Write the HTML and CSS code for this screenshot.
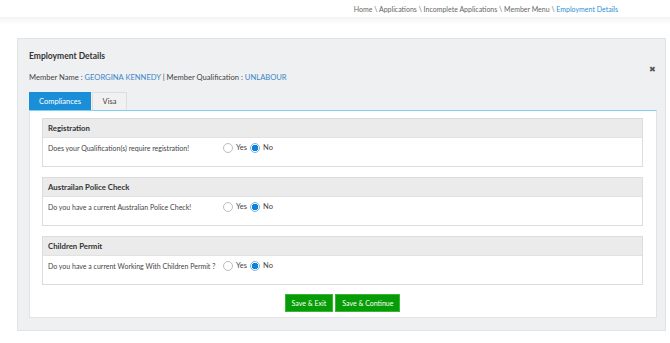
FILE: index.html
```html
<!DOCTYPE html>
<html>
<head>
<meta charset="utf-8">
<link rel="stylesheet" href="styles.css">
</head>
<body>
<div class="crumbs">
  <span>Home \ Applications \ Incomplete Applications \ Member Menu \ <a class="crumb-current">Employment Details</a></span>
</div>
<div class="crumb-shadow"></div>
<div class="panel">
  <div class="panel-head">
    <div class="head-text">
      <div class="title">Employment Details</div>
      <div class="member">Member Name : <span class="link">GEORGINA KENNEDY</span> | Member Qualification : <span class="link">UNLABOUR</span></div>
    </div>
    <div class="close">&#x2716;</div>
  </div>
  <div class="tabs">
    <div class="tab active">Compliances</div>
    <div class="tab">Visa</div>
  </div>
  <div class="tab-content">
    <div class="section">
      <div class="section-head">Registration</div>
      <div class="section-body">
        <span class="question">Does your Qualification(s) require registration!</span>
        <span class="radio"></span><span class="opt">Yes</span>
        <span class="radio on"></span><span class="opt">No</span>
      </div>
    </div>
    <div class="section">
      <div class="section-head">Austrailan Police Check</div>
      <div class="section-body">
        <span class="question">Do you have a current Australian Police Check!</span>
        <span class="radio"></span><span class="opt">Yes</span>
        <span class="radio on"></span><span class="opt">No</span>
      </div>
    </div>
    <div class="section">
      <div class="section-head">Children Permit</div>
      <div class="section-body">
        <span class="question">Do you have a current Working With Children Permit ?</span>
        <span class="radio"></span><span class="opt">Yes</span>
        <span class="radio on"></span><span class="opt">No</span>
      </div>
    </div>
    <div class="actions">
      <button class="btn">Save &amp; Exit</button>
      <button class="btn">Save &amp; Continue</button>
    </div>
  </div>
</div>
</body>
</html>
```

FILE: styles.css
```css
* { box-sizing: border-box; }
body {
  margin: 0;
  background: #fff;
  font-family: Lato, "Open Sans", sans-serif;
  font-size: 7.5px;
  color: #333;
}
.crumbs {
  height: 17px;
  display: flex;
  justify-content: flex-end;
  align-items: center;
  padding-right: 52px;
  color: #666;
  font-size: 7px;
  white-space: nowrap;
}
.crumb-current { color: #2d8fd5; }
.crumb-shadow {
  height: 8px;
  background: linear-gradient(#f4f4f5, #fff);
}
.panel {
  margin: 13px 4px 0 17px;
  height: 293px;
  background: #eff0f2;
  border: 1px solid #e2e3e5;
  padding: 0 8px 0 11px;
}
.panel-head {
  display: flex;
  justify-content: space-between;
  align-items: flex-start;
  padding-top: 12px;
}
.title {
  font-weight: bold;
  font-size: 8.5px;
  color: #333;
  height: 10px;
  line-height: 10px;
}
.member {
  margin-top: 11px;
  height: 10px;
  line-height: 10px;
  color: #444;
  font-size: 7.6px;
}
.link { color: #3a86c8; }
.close {
  font-size: 7.5px;
  line-height: 8px;
  color: #555;
  margin-top: 15px;
  margin-right: 1px;
}
.tabs {
  display: flex;
  margin-top: 10px;
  gap: 1px;
}
.tab {
  height: 18px;
  line-height: 17px;
  background: #f1f1f1;
  border: 1px solid #dedede;
  border-bottom: none;
  color: #444;
  text-align: center;
  width: 35px;
}
.tab.active {
  background: #1a8fd8;
  border-color: #1a8fd8;
  color: #fff;
  width: 62px;
}
.tab-content {
  background: #fff;
  border-top: 1.5px solid #7cd0f2;
  border-left: 1px solid #e3e3e3;
  border-right: 1px solid #e3e3e3;
  border-bottom: 1px solid #e3e3e3;
  height: 208px;
  padding: 7px 13px 0 12px;
  display: flex;
  flex-direction: column;
  gap: 10px;
}
.section {
  border: 1px solid #dcdcdc;
  background: #fff;
}
.section-head {
  height: 19px;
  line-height: 19px;
  background: #ebebeb;
  border-bottom: 1px solid #e2e2e2;
  padding-left: 5px;
  font-weight: bold;
  color: #333;
  font-size: 7.8px;
}
.section-body {
  height: 28px;
  display: flex;
  align-items: flex-start;
  padding: 5px 0 0 5px;
  line-height: 10px;
  color: #444;
}
.question {
  width: 175px;
  white-space: nowrap;
  font-size: 7px;
}
.radio {
  width: 10px;
  height: 10px;
  border: 1px solid #bdbdbd;
  border-radius: 50%;
  background: #fff;
  margin-right: 3px;
  flex: none;
}
.radio.on {
  border-color: #7fb5e0;
  background: radial-gradient(circle, #0a82de 0 3px, #fff 3.5px);
}
.opt { margin-right: 3px; }
.actions {
  display: flex;
  justify-content: center;
  gap: 2px;
  margin-top: -1px;
}
.btn {
  font-family: Lato, "Open Sans", sans-serif;
  font-size: 7px;
  color: #fff;
  background: #069c06;
  border: 1px solid #3bb53b;
  height: 18px;
  padding: 0 6px;
  cursor: pointer;
}
```
